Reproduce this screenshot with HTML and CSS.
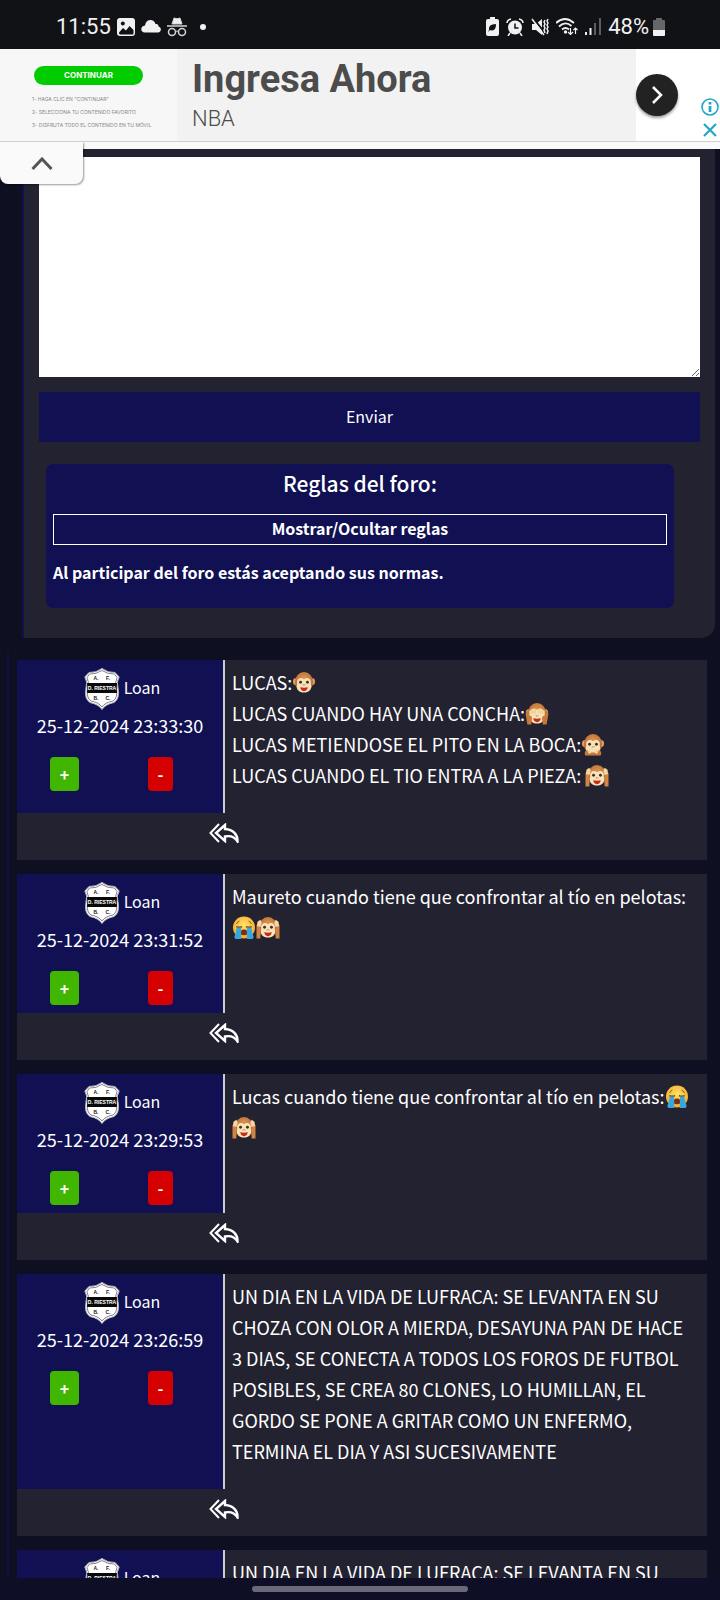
FILE: index.html
```html
<!DOCTYPE html>
<html lang="es">
<head>
<meta charset="utf-8">
<meta name="viewport" content="width=device-width, initial-scale=1">
<title>Foro</title>
<link rel="stylesheet" href="styles.css">
</head>
<body>
<svg class="sprite" aria-hidden="true">
  <defs>
    <radialGradient id="fur" cx="50%" cy="40%" r="60%"><stop offset="0" stop-color="#e09a58"/><stop offset="1" stop-color="#b8682f"/></radialGradient>
    <radialGradient id="yellow" cx="50%" cy="40%" r="60%"><stop offset="0" stop-color="#ffe468"/><stop offset="1" stop-color="#f5a92b"/></radialGradient>
    <symbol id="monkey" viewBox="0 0 24 24">
      <ellipse cx="3" cy="11" rx="2.500" ry="3.500" fill="#dba06a"/><ellipse cx="21" cy="11" rx="2.500" ry="3.500" fill="#dba06a"/>
      <ellipse cx="12" cy="11.500" rx="9.500" ry="10.500" fill="url(#fur)"/>
      <path d="M12 8.500C8 5.500 4 8.500 5 13c-2 6 2 9.500 7 9.500s9-3.500 7-9.500c1-4.500-3-7.500-7-4.500z" fill="#f8e2b8"/>
      <circle cx="8.400" cy="11.800" r="1.500" fill="#43301f"/><circle cx="15.600" cy="11.800" r="1.500" fill="#43301f"/>
      <path d="M10.800 14.500h.8M12.600 14.500h.8" stroke="#73451f"/>
    </symbol>
    <symbol id="smile-mouth" viewBox="0 0 24 24"><path d="M8 17q4 1 8 0-1 4-4 4t-4-4z" fill="#c62a1c"/></symbol>
    <symbol id="see" viewBox="0 0 24 24">
      <use href="#monkey"/><use href="#smile-mouth"/>
      <path d="M2 23.500 0 12l3-4 4 6-1 9.500zM22 23.500 24 12l-3-4-4 6 1 9.500z" fill="#c9783a"/>
      <path d="M5 9.500v4M7 8v7M9 7.500v7M11 8.500v4M13 8.500v4M15 7.500v7M17 8v7M19 9.500v4" stroke="#f9e0b0" stroke-width="2" stroke-linecap="round"/>
      <path d="M6 8.500v4M8 8v4M10 8v4M14 8v4M16 8v4M18 8.500v4" stroke="#d9aa70" stroke-width=".5"/>
    </symbol>
    <symbol id="speak" viewBox="0 0 24 24">
      <use href="#monkey"/>
      <path d="M4 23.500q-2-4 2-6l3 1 3 2 3-2 3-1q4 2 2 6z" fill="#c9783a"/>
      <path d="M7 18.500l5-2M8 20.500l4-2M17 18.500l-5-2M16 20.500l-4-2" stroke="#f9e0b0" stroke-width="2" stroke-linecap="round"/>
    </symbol>
    <symbol id="hear" viewBox="0 0 24 24">
      <use href="#monkey"/><use href="#smile-mouth"/>
      <path d="M0 23.500V9l3 2 1.500 4-.5 8.500zM24 23.500V9l-3 2-1.500 4 .5 8.500z" fill="#d08545"/>
      <path d="M.5 10.500 1 6l3-2 1.500 3L4 11.500zM23.500 10.500 23 6l-3-2-1.500 3 1.500 4.500z" fill="#f6d7a3"/>
    </symbol>
    <symbol id="sob" viewBox="0 0 24 24">
      <circle cx="12" cy="12" r="11.500" fill="url(#yellow)"/>
      <path d="M4 8q2-1 3-3M20 8q-2-1-3-3" stroke="#7c4a17" fill="none"/>
      <path d="M4 11q3 1.500 6 0M14 11q3 1.500 6 0" stroke="#6b3d12" stroke-width="1.500" fill="none"/>
      <path d="M8 19q0-5 4-5t4 5q-4 2-8 0z" fill="#7d2b16"/>
      <path d="M4.500 12H9v12H3q-2-2 0-5zM15 12h4.500L21 19q2 3 0 5h-6z" fill="#37a6dc"/>
    </symbol>
    <symbol id="crest" viewBox="0 0 36 42">
      <path d="M18 .5Q12 5 5 4.500L.8 9Q4 14 2 20q-2 11 4 14.500 9 2 12 7 3-5 12-7 6-3.500 4-14.500-2-6 1.200-11L31 4.500Q24 5 18 .5z" fill="#fff" stroke="#b9b9c4"/>
      <path d="M18 2.500Q12 6.500 5.500 6L3 9.500Q5.500 14 3.600 20q-1.600 10 3.400 13 8 1.500 11 6 3-4.500 11-6 5-3 3.400-13-1.900-6 .6-10.500L30.500 6Q24 6.500 18 2.500z" fill="#fff" stroke="#333" stroke-width=".6"/>
      <path d="M3 15h30q-.8 5 0 10H3q.8-5 0-10z" fill="#090909"/>
      <g class="crest-text"><text x="12" y="12">A.</text><text x="24" y="12">F.</text><text x="12" y="32">B.</text><text x="24" y="32">C.</text><text class="crest-name" x="18" y="22">D. RIESTRA</text></g>
    </symbol>
    <symbol id="reply" viewBox="0 0 30 20">
      <path d="M10 1 1.500 10 10 19" fill="none" stroke="#fff" stroke-width="2"/>
      <path d="M16 2 7 10l9 8v-4.500c5-1 9.500 0 12.500 5C29 11.500 24 6.500 16 6z" fill="none" stroke="#fff" stroke-width="2.400"/>
    </symbol>
  </defs>
</svg>
<div class="screen">
  <header class="status">
    <div class="status-group">
      <span class="clock">11:55</span>
      <svg width="18" height="18" viewBox="0 0 18 18"><rect width="18" height="18" rx="3" fill="#f1f1f1"/><circle cx="5.800" cy="5.500" r="2" fill="#111216"/><path d="M2 14.500 6 10l3 2.500L12.500 8l4 4v3.500q0 1-1 1H3q-1 0-1-2z" fill="#111216"/></svg>
      <svg width="20" height="13" viewBox="0 0 20 13"><path d="M4 12.500C-1 12.500-1 6 4 5.500 5-1.500 13-1.500 14.500 4c3 0 3 1.500 3 2.500 3.500 1 3 6-.5 6z" fill="#f1f1f1"/></svg>
      <svg width="20" height="20" viewBox="0 0 20 20" fill="none" stroke="#d5d5d5"><path d="M5 7 7 1q3 1.500 6 0l2 6z" fill="#f1f1f1"/><path d="M0 9h20" stroke-width="1.500"/><circle cx="5" cy="15" r="3.500" stroke-width="1.500"/><circle cx="15" cy="15" r="3.500" stroke-width="1.500"/><path d="M8.500 14.500q1.500-1 3 0"/></svg>
      <span class="dot"></span>
    </div>
    <div class="status-group status-right">
      <svg width="13" height="19" viewBox="0 0 13 19"><path d="M4 0h5v2h2q2 0 2 2v13q0 2-2 2H2q-2 0-2-2V4q0-2 2-2h2z" fill="#f1f1f1"/><path d="M3 13q-1-6 7-6 0 8-6 6l3-3-5 5" fill="#111216"/></svg>
      <svg width="18" height="18" viewBox="0 0 18 18"><circle cx="9" cy="9.500" r="7" fill="#f1f1f1"/><path d="M1 5q0-3 4-4M17 5q0-3-4-4M4 15l-2 3M14 15l2 3" stroke="#f1f1f1" stroke-width="1.500" fill="none"/><path d="M9 5.500V10h3.500" stroke="#111216" stroke-width="1.500" fill="none"/></svg>
      <svg width="18" height="18" viewBox="0 0 18 18"><path d="M1 6h4l6-5v16l-6-5H1z" fill="#f1f1f1"/><path d="M2 0l12 15" stroke="#111216" stroke-width="2"/><path d="M1 1l12 16M14 2l-1 2 1 2-1 2 1 2-1 2 1 3M17 1l-1 2 1 2-1 2 1 2-1 2 1 2-1 3" stroke="#f1f1f1" stroke-width="1.500" fill="none"/></svg>
      <svg width="22" height="18" viewBox="0 0 22 18" fill="none" stroke="#f1f1f1" stroke-width="1.800"><path d="M0 5q9-8 18 0M3 8.500q6.500-6 12.500-.5M6 11.500q3.500-3 7 0"/><circle cx="9.500" cy="14" r=".8"/><path d="M14.500 10v6.500M12 14l2.500 2.500L17 14M19.500 16v-6M17.500 12l2-2 2 2" stroke-width="1.200"/></svg>
      <svg width="16" height="17" viewBox="0 0 16 17"><path d="M0 14h2v3H0zM4.500 10h2v7h-2z" fill="#f1f1f1"/><path d="M9 5h2v12H9zM14 0h2v17h-2z" fill="#5c5d60"/></svg>
      <span class="percent">48%</span>
      <svg width="12" height="18" viewBox="0 0 12 18"><path d="M3 0h6v2h2q1 0 1 1v9H0V3q0-1 1-1h2z" fill="#666769"/><path d="M0 12h12v5q0 1-1 1H1q-1 0-1-1z" fill="#f1f1f1"/></svg>
    </div>
  </header>

  <aside class="ad">
    <div class="ad-picture">
      <span class="ad-cta">CONTINUAR</span>
      <ol class="ad-steps"><li>1- HAGA CLIC EN "CONTINUAR"</li><li>2- SELECCIONA TU CONTENIDO FAVORITO</li><li>3- DISFRUTA TODO EL CONTENIDO EN TU MÓVIL</li></ol>
    </div>
    <div class="ad-copy"><strong>Ingresa Ahora</strong><span>NBA</span></div>
    <div class="ad-actions">
      <button class="ad-go" type="button" aria-label="Ir"><svg width="12" height="18" viewBox="0 0 12 18"><path d="m2 1 8 8-8 8" fill="none" stroke="#fff" stroke-width="2.500"/></svg></button>
      <div class="ad-marks">
        <svg width="18" height="18" viewBox="0 0 18 18"><circle cx="9" cy="9" r="8" fill="none" stroke="#22a8c3" stroke-width="1.600"/><path d="M9 4v2.500M9 8v6" stroke="#22a8c3" stroke-width="2.800"/></svg>
        <svg width="14" height="14" viewBox="0 0 14 14"><path d="m1 1 12 12M13 1 1 13" stroke="#22a8c3" stroke-width="2.200"/></svg>
      </div>
    </div>
    <button class="ad-tab" type="button" aria-label="Ocultar anuncio"><svg width="22" height="13" viewBox="0 0 22 13"><path d="m1.500 12 9.500-10 9.500 10" fill="none" stroke="#555" stroke-width="3"/></svg></button>
  </aside>

  <main class="content">
    <form class="panel">
      <textarea class="message" aria-label="Mensaje"></textarea>
      <button class="send" type="button">Enviar</button>
      <section class="rules">
        <h2>Reglas del foro:</h2>
        <button class="toggle" type="button">Mostrar/Ocultar reglas</button>
        <p>Al participar del foro estás aceptando sus normas.</p>
      </section>
    </form>

    <section class="comments">
      <article class="comment">
        <div class="author">
          <div class="who"><svg class="crest" role="img" aria-label="Deportivo Riestra"><use href="#crest"/></svg><span>Loan</span></div>
          <time>25-12-2024 23:33:30</time>
          <div class="votes"><button class="up" type="button">+</button><button class="down" type="button">-</button></div>
        </div>
        <p class="text">LUCAS:<svg class="emoji"><use href="#monkey"/><use href="#smile-mouth"/></svg><br>LUCAS CUANDO HAY UNA CONCHA:<svg class="emoji"><use href="#see"/></svg><br>LUCAS METIENDOSE EL PITO EN LA BOCA:<svg class="emoji"><use href="#speak"/></svg><br>LUCAS CUANDO EL TIO ENTRA A LA PIEZA: <svg class="emoji"><use href="#hear"/></svg></p>
        <footer><button class="reply" type="button" aria-label="Responder"><svg><use href="#reply"/></svg></button></footer>
      </article>
      <article class="comment">
        <div class="author">
          <div class="who"><svg class="crest" role="img" aria-label="Deportivo Riestra"><use href="#crest"/></svg><span>Loan</span></div>
          <time>25-12-2024 23:31:52</time>
          <div class="votes"><button class="up" type="button">+</button><button class="down" type="button">-</button></div>
        </div>
        <p class="text">Maureto cuando tiene que confrontar al tío en pelotas: <svg class="emoji"><use href="#sob"/></svg><svg class="emoji"><use href="#hear"/></svg></p>
        <footer><button class="reply" type="button" aria-label="Responder"><svg><use href="#reply"/></svg></button></footer>
      </article>
      <article class="comment">
        <div class="author">
          <div class="who"><svg class="crest" role="img" aria-label="Deportivo Riestra"><use href="#crest"/></svg><span>Loan</span></div>
          <time>25-12-2024 23:29:53</time>
          <div class="votes"><button class="up" type="button">+</button><button class="down" type="button">-</button></div>
        </div>
        <p class="text">Lucas cuando tiene que confrontar al tío en pelotas:<svg class="emoji"><use href="#sob"/></svg><svg class="emoji"><use href="#hear"/></svg></p>
        <footer><button class="reply" type="button" aria-label="Responder"><svg><use href="#reply"/></svg></button></footer>
      </article>
      <article class="comment">
        <div class="author">
          <div class="who"><svg class="crest" role="img" aria-label="Deportivo Riestra"><use href="#crest"/></svg><span>Loan</span></div>
          <time>25-12-2024 23:26:59</time>
          <div class="votes"><button class="up" type="button">+</button><button class="down" type="button">-</button></div>
        </div>
        <p class="text">UN DIA EN LA VIDA DE LUFRACA: SE LEVANTA EN SU CHOZA CON OLOR A MIERDA, DESAYUNA PAN DE HACE 3 DIAS, SE CONECTA A TODOS LOS FOROS DE FUTBOL POSIBLES, SE CREA 80 CLONES, LO HUMILLAN, EL GORDO SE PONE A GRITAR COMO UN ENFERMO, TERMINA EL DIA Y ASI SUCESIVAMENTE</p>
        <footer><button class="reply" type="button" aria-label="Responder"><svg><use href="#reply"/></svg></button></footer>
      </article>
      <article class="comment">
        <div class="author">
          <div class="who"><svg class="crest" role="img" aria-label="Deportivo Riestra"><use href="#crest"/></svg><span>Loan</span></div>
        </div>
        <p class="text">UN DIA EN LA VIDA DE LUFRACA: SE LEVANTA EN SU</p>
      </article>
    </section>
  </main>
  <div class="gesture"><span></span></div>
</div>
</body>
</html>
```
FILE: styles.css
```css
* { box-sizing: border-box; }
body {
  margin: 0;
  background: #0e0f21;
  color: #fff;
  font-family: "Noto Sans CJK SC", "Open Sans", sans-serif;
  font-size: 18px;
}
button { font: inherit; color: inherit; border: 0; padding: 0; background: none; }
h2, p, ol { margin: 0; padding: 0; }
svg { display: block; flex: none; }
.sprite { position: absolute; width: 0; height: 0; }
.screen { height: 100vh; display: flex; flex-direction: column; overflow: hidden; }

.status {
  flex: none;
  height: 49px;
  padding: 4px 55px 0 56px;
  display: flex;
  align-items: center;
  justify-content: space-between;
  background: #111216;
  color: #f1f1f1;
  font: 22px/28px Roboto, sans-serif;
}
.status-group { display: flex; align-items: center; gap: 6px; }
.status-right { gap: 7px; }
.percent { margin-right: -3px; }
.dot { width: 6px; height: 6px; margin-left: 7px; border-radius: 50%; background: #f1f1f1; }

.ad {
  position: relative;
  z-index: 1;
  flex: none;
  height: 100px;
  padding-bottom: 8px;
  display: flex;
  background: linear-gradient(#cfcfcf, #cfcfcf) 0 92px / 100% 1px no-repeat #fafafa;
  color: #4c4c4c;
  font-family: Roboto, sans-serif;
}
.ad-picture { width: 177px; padding: 17px 0 0 32px; background: #f7f7f7; }
.ad-cta {
  display: block;
  width: 109px;
  margin-left: 2px;
  border-radius: 10px;
  background: #0c0;
  color: #fff;
  text-align: center;
  font: bold 8px/19px Inter, sans-serif;
}
.ad-steps { margin-top: 8px; list-style: none; white-space: nowrap; font: 5px/13px Inter, sans-serif; color: #888; }
.ad-copy { flex: 1; padding: 7px 0 0 15px; display: flex; flex-direction: column; background: #f2f2f2; }
.ad-copy strong { font-size: 38px; line-height: 46px; }
.ad-copy span { font-size: 22px; line-height: 34px; font-weight: 300; }
.ad-actions { width: 84px; display: flex; justify-content: space-between; background: #fff; }
.ad-go {
  width: 42px;
  height: 42px;
  margin-top: 25px;
  border-radius: 50%;
  display: grid;
  place-items: center;
  background: #222;
  box-shadow: 0 2px 3px #0006;
}
.ad-marks { display: flex; flex-direction: column; align-items: center; gap: 7px; padding: 49px 1px 0 0; }
.ad-tab {
  position: absolute;
  left: 0;
  top: 93px;
  width: 83px;
  height: 42px;
  display: grid;
  place-items: center;
  border-radius: 0 0 8px 8px;
  background: #fafafa;
  box-shadow: 1px 1px 2px #0006;
  clip-path: inset(0 -6px -6px 0);
}

.content { flex: 1; min-height: 0; overflow: hidden; }
.panel {
  margin: 0 5px 0 22px;
  padding: 8px 15px 30px;
  border-left: 2px solid #101050;
  border-radius: 0 0 14px 0;
  background: #232231;
}
.message { display: block; width: 100%; height: 220px; border: 0; border-radius: 0; background: #fff; }
.send { display: block; width: 100%; margin-top: 15px; padding-bottom: 2px; height: 50px; background: #101052; font-size: 16px; line-height: 24px; }
.rules { margin: 22px 26px 0 7px; padding: 3px 7px 20px; border-radius: 7px; background: #101052; }
.rules h2 { text-align: center; font-size: 21px; line-height: 32px; font-weight: 500; }
.toggle { display: block; width: 100%; margin: 15px 0 13px; padding-bottom: 2px; border: 1px solid #fff; font-size: 16px; line-height: 27px; font-weight: 700; }
.rules p { padding-bottom: 1px; font-size: 16px; line-height: 29px; font-weight: 700; }

.comments { margin: 15px 13px 0 7px; padding: 7px 0 0 8px; border-left: 2px solid #101042; display: grid; gap: 14px; }
.comment { display: grid; grid-template-columns: 208px 1fr; background: #232231; }
.author { min-height: 139px; padding-top: 8px; border-right: 2px solid #ccc; background: #101052; }
.who { display: flex; justify-content: center; align-items: center; gap: 4px; font-size: 16px; line-height: 24px; padding-left: 4px; }
.who span { padding-bottom: 4px; }
.crest { width: 36px; height: 42px; }
.crest-text { font: bold 5px "Liberation Sans", sans-serif; text-anchor: middle; fill: #222; }
.crest-name { fill: #fff; font-size: 5px; }
.author time { display: block; text-align: center; line-height: 31px; }
.votes { display: flex; gap: 69px; padding: 16px 0 8px 33px; font-size: 16px; font-weight: 700; }
.up, .down { height: 34px; border-radius: 4px; line-height: 24px; }
.up { width: 29px; background: #41b600; }
.down { width: 25px; background: #d50000; }
.text { padding: 7px 12px 22px 7px; line-height: 31px; }
.emoji { display: inline-block; width: 24px; height: 23px; vertical-align: -4px; }
.comment footer { grid-column: 1 / -1; height: 47px; padding: 10px 0 0 192px; }
.reply { display: block; }
.reply svg { width: 30px; height: 20px; }

.gesture { flex: none; height: 22px; padding-top: 8px; background: #0e0e26; }
.gesture span { display: block; width: 30%; height: 6px; margin: 0 auto; border-radius: 3px; background: #6a6979; }
```
